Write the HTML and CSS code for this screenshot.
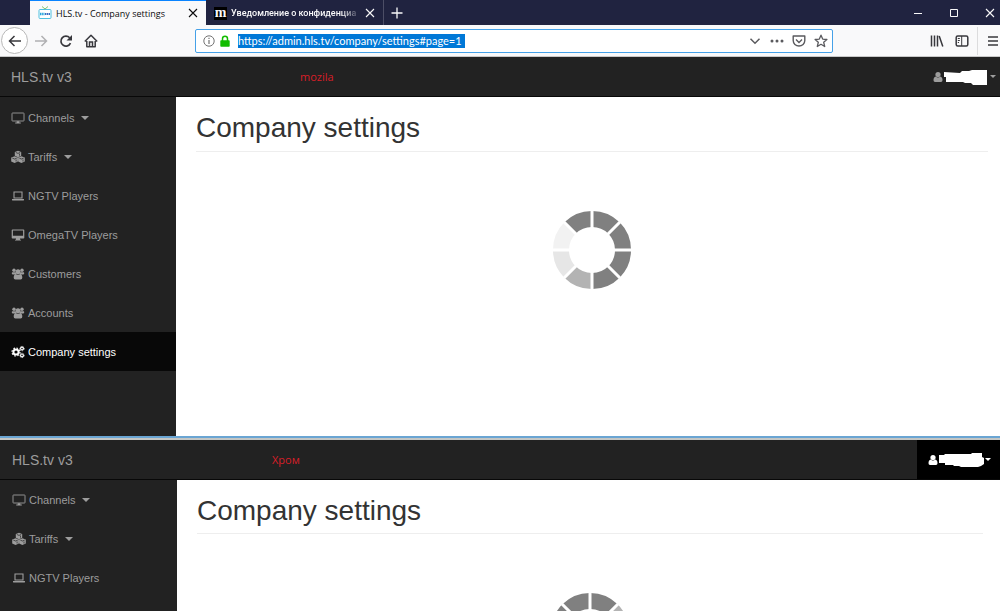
FILE: index.html
```html
<!DOCTYPE html>
<html lang="en">
<head>
<meta charset="utf-8">
<title>HLS.tv - Company settings</title>
<link rel="stylesheet" href="styles.css">
</head>
<body>
<svg class="sprite" aria-hidden="true">
  <symbol id="monitor" viewBox="0 0 14 14"><path d="M1.500 2q-.5 0-.5.5v7q0 .5.5.5h11q.5 0 .5-.5v-7q0-.5-.5-.5z" fill="none" stroke="currentColor" stroke-width=".9"/><path d="M5.700 10.300h2.600v1.200h1.500v.9H4.200v-.9h1.500z" fill="currentColor"/></symbol>
  <symbol id="desktop" viewBox="0 0 14 14"><path fill="currentColor" fill-rule="evenodd" d="M1.500 1.500h11q.8 0 .8.8v7.400q0 .8-.8.8H9v1.200h1v.9H4v-.9h1v-1.200H1.500q-.8 0-.8-.8V2.300q0-.8.8-.8zM1.900 2.600v5.200h10.200V2.600z"/></symbol>
  <symbol id="laptop" viewBox="0 0 14 14"><path d="M3 3h8v6H3z" fill="none" stroke="currentColor" stroke-width="1.100"/><path d="M1 10h12v.7q0 .9-1 .9H2q-1 0-1-.9z" fill="currentColor"/></symbol>
  <symbol id="cubes" viewBox="0 0 14 14"><g fill="currentColor"><path d="M7 .8l3.200 1.300v3.700L7 7.200 3.800 5.800V2.100z"/><path d="M3.600 6.200l3.300 1.400v4L3.600 13 .2 11.600v-4z"/><path d="M10.400 6.200l3.400 1.400v4L10.400 13l-3.300-1.400v-4z"/></g><g fill="none" stroke="#222" stroke-width=".7"><path d="M4.800 2.500L7 3.400l2.200-.9M8.500 3.700v2M1.300 8.100l2.300.9 2.200-.9M5.100 9.500v2M8.300 8.100l2.100.9 2.300-.9M12 9.500v2"/></g></symbol>
  <symbol id="users" viewBox="0 0 14 14"><g fill="currentColor"><circle cx="3" cy="3.300" r="1.700"/><circle cx="11" cy="3.300" r="1.700"/><path d="M1.300 5.200h3.500l.4 2.300H2Q.8 7.500.8 6.400q0-1.200.5-1.200zM12.700 5.200H9.200l-.4 2.300H12q1.200 0 1.200-1.100 0-1.200-.5-1.200z"/><circle cx="7" cy="4.700" r="2.500"/><path d="M4.600 6.900q2.400 1.600 4.800 0 1.900.4 1.900 3.900 0 1.700-1.600 1.700H4.300q-1.600 0-1.600-1.700 0-3.500 1.900-3.900z"/></g></symbol>
  <symbol id="cogs" viewBox="0 0 14 14"><g fill="none" stroke="currentColor"><circle cx="5" cy="7" r="2.600" stroke-width="2"/><circle cx="5" cy="7" r="4" stroke-width="1.200" stroke-dasharray="1.600 1.540"/><circle cx="11" cy="3.600" r="1.400" stroke-width="1.200"/><circle cx="11" cy="3.600" r="2.200" stroke-width=".8" stroke-dasharray="1 .970"/><circle cx="11" cy="10.400" r="1.400" stroke-width="1.200"/><circle cx="11" cy="10.400" r="2.200" stroke-width=".8" stroke-dasharray="1 .970"/></g></symbol>
  <symbol id="user" viewBox="0 0 10 12"><g fill="currentColor"><circle cx="5" cy="3.500" r="2.600"/><path d="M2.700 5.600q2.300 1.700 4.600 0Q9.500 6 9.500 9.300q0 1.700-1.500 1.700H2Q.5 11 .5 9.300.5 6 2.700 5.600z"/></g></symbol>
  <symbol id="caret" viewBox="0 0 8 4"><path d="M0 0h8L4 4z" fill="currentColor"/></symbol>
  <symbol id="close" viewBox="0 0 10 10"><path d="M1 1l8 8M9 1L1 9" fill="none" stroke="currentColor" stroke-width="1.100"/></symbol>
</svg>

<section class="window">
  <div class="titlebar">
    <div class="tab tab-active">
      <svg class="favicon" viewBox="0 0 14 14" aria-hidden="true"><path d="M4 .5L7 3l3-2.500" fill="none" stroke="#7fc46a"/><rect x="1" y="3.500" width="12" height="9" rx="1" fill="#fff" stroke="#4fc0e0"/><path d="M2 8h4.500" stroke="#26a6dd" stroke-width="2.400" stroke-dasharray="1.200 .5"/><path d="M7 8h5" stroke="#3a6fc4" stroke-width="2" stroke-dasharray="1.400 .5"/></svg>
      <span class="tab-title">HLS.tv - Company settings</span>
      <button class="tab-close" aria-label="Close tab"><svg width="10" height="10"><use href="#close"/></svg></button>
    </div>
    <div class="tab">
      <span class="m-icon">m</span>
      <span class="tab-title tab-fade">Уведомление о конфиденциа</span>
      <button class="tab-close" aria-label="Close tab"><svg width="10" height="10"><use href="#close"/></svg></button>
    </div>
    <button class="new-tab" aria-label="New tab"><svg width="12" height="12" viewBox="0 0 12 12"><path d="M6 .5v11M.5 6h11" stroke="currentColor" stroke-width="1.300"/></svg></button>
    <div class="window-controls">
      <button aria-label="Minimize"><svg width="10" height="10" viewBox="0 0 10 10"><path d="M1 5.500h8" stroke="currentColor"/></svg></button>
      <button aria-label="Maximize"><svg width="10" height="10" viewBox="0 0 10 10"><path d="M1.500 1.500h7v7h-7z" fill="none" stroke="currentColor"/></svg></button>
      <button aria-label="Close window"><svg width="10" height="10"><use href="#close"/></svg></button>
    </div>
  </div>

  <div class="toolbar">
    <button class="back" aria-label="Back"><svg width="14" height="14" viewBox="0 0 14 14"><path d="M13 7H1.500M6.500 2l-5 5 5 5" fill="none" stroke="currentColor" stroke-width="1.500"/></svg></button>
    <button class="nav-icon disabled" aria-label="Forward"><svg width="14" height="14" viewBox="0 0 14 14"><path d="M1 7h11.500M7.500 2l5 5-5 5" fill="none" stroke="currentColor" stroke-width="1.500"/></svg></button>
    <button class="nav-icon" aria-label="Reload"><svg width="14" height="14" viewBox="0 0 14 14"><path d="M11.500 9.200A5 5 0 1 1 10.700 3.800" fill="none" stroke="currentColor" stroke-width="1.700"/><path d="M13 1v5.500H7.500z" fill="currentColor"/></svg></button>
    <button class="nav-icon" aria-label="Home"><svg width="14" height="14" viewBox="0 0 14 14"><path d="M.8 7.500L7 1.300l6.200 6.200M2.800 7v5.800h8.400V7" fill="none" stroke="currentColor" stroke-width="1.500" stroke-linejoin="round"/><path d="M5.500 12.500V8h3v4.500" fill="none" stroke="currentColor" stroke-width="1.500"/></svg></button>
    <form class="urlbar">
      <svg width="12" height="12" viewBox="0 0 12 12" aria-hidden="true"><circle cx="6" cy="6" r="5.200" fill="none" stroke="#737373"/><path d="M6 5v4M6 2.800v1.300" stroke="#737373" stroke-width="1.200"/></svg>
      <svg width="12" height="12" viewBox="0 0 12 12" aria-hidden="true"><path d="M3.500 6V3.800a2.500 2.500 0 0 1 5 0V6" fill="none" stroke="#12bc00" stroke-width="1.500"/><rect x="1.300" y="5.200" width="9.400" height="6.500" rx=".8" fill="#12bc00"/></svg>
      <input class="url" type="text" aria-label="Address" value="https://admin.hls.tv/company/settings#page=1">
      <div class="url-actions">
        <button type="button" aria-label="History"><svg width="14" height="14" viewBox="0 0 14 14"><path d="M2.500 4.700L7 9.200l4.500-4.500" fill="none" stroke="currentColor" stroke-width="1.500"/></svg></button>
        <button type="button" aria-label="Page actions"><svg width="14" height="14" viewBox="0 0 14 14"><g fill="currentColor"><circle cx="2" cy="7" r="1.500"/><circle cx="7" cy="7" r="1.500"/><circle cx="12" cy="7" r="1.500"/></g></svg></button>
        <button type="button" aria-label="Save to Pocket"><svg width="14" height="14" viewBox="0 0 14 14"><path d="M1.200 2h11.600v4.500a5.800 5.500 0 0 1-11.600 0z" fill="none" stroke="currentColor" stroke-width="1.400" stroke-linejoin="round"/><path d="M4 5.500l3 3 3-3" fill="none" stroke="currentColor" stroke-width="1.400"/></svg></button>
        <button type="button" aria-label="Bookmark"><svg width="14" height="14" viewBox="0 0 14 14"><path d="M7 1.200l1.700 3.900 4.200.4-3.200 2.800 1 4.200L7 10.300l-3.700 2.200 1-4.200L1.100 5.500l4.200-.4z" fill="none" stroke="currentColor" stroke-width="1.300" stroke-linejoin="round"/></svg></button>
      </div>
    </form>
    <div class="tools">
      <button aria-label="Library"><svg width="14" height="14" viewBox="0 0 14 14"><path d="M1.500 1.500v11M4.500 1.500v11M7.500 1.500v11M9.200 2l3.600 10.500" fill="none" stroke="currentColor" stroke-width="1.500"/></svg></button>
      <button aria-label="Sidebars"><svg width="14" height="14" viewBox="0 0 14 14"><rect x="1.200" y="2" width="11.600" height="10" rx="1.500" fill="none" stroke="currentColor" stroke-width="1.500"/><path d="M6.700 2v10M2.800 4.500h2M2.800 6.500h2M2.800 8.500h1.200" stroke="currentColor"/></svg></button>
      <button class="menu" aria-label="Menu"><svg width="10" height="14" viewBox="0 0 10 14"><path d="M0 3h10M0 7h10M0 11h10" stroke="currentColor" stroke-width="1.500"/></svg></button>
    </div>
  </div>

  <header class="navbar">
    <a class="brand" href="#">HLS.tv v3</a>
    <span class="note">mozila</span>
    <a class="account" href="#" aria-label="Account">
      <svg width="10" height="12"><use href="#user"/></svg>
      <svg width="45" height="16" viewBox="0 0 45 16"><path d="M0 3l16 1 2-2h7l3-1h15v15H29l-2-2h-6l-2-1H2V8H0z" fill="#fff"/></svg>
      <svg width="6" height="3"><use href="#caret"/></svg>
    </a>
  </header>
  <div class="page">
    <nav class="sidebar">
      <a href="#"><svg width="14" height="14"><use href="#monitor"/></svg>Channels<svg class="caret" width="8" height="4"><use href="#caret"/></svg></a>
      <a href="#"><svg width="14" height="14"><use href="#cubes"/></svg>Tariffs<svg class="caret" width="8" height="4"><use href="#caret"/></svg></a>
      <a href="#"><svg width="14" height="14"><use href="#laptop"/></svg>NGTV Players</a>
      <a href="#"><svg width="14" height="14"><use href="#desktop"/></svg>OmegaTV Players</a>
      <a href="#"><svg width="14" height="14"><use href="#users"/></svg>Customers</a>
      <a href="#"><svg width="14" height="14"><use href="#users"/></svg>Accounts</a>
      <a class="current" href="#"><svg width="14" height="14"><use href="#cogs"/></svg>Company settings</a>
    </nav>
    <main class="content">
      <h1>Company settings</h1>
      <svg class="spinner" viewBox="-39 -39 78 78" role="img" aria-label="Loading">
        <g fill="none" stroke="#808080" stroke-width="16">
          <path d="M0-31A31 31 0 0 1 22-22"/><path d="M22-22A31 31 0 0 1 31 0"/><path d="M31 0A31 31 0 0 1 22 22"/><path d="M22 22A31 31 0 0 1 0 31"/>
          <path d="M0 31A31 31 0 0 1-22 22" stroke="#b3b3b3"/><path d="M-22 22A31 31 0 0 1-31 0" stroke="#e6e6e6"/><path d="M-31 0A31 31 0 0 1-22-22" stroke="#f2f2f2"/><path d="M-22-22A31 31 0 0 1 0-31"/>
        </g>
        <path d="M0-39v78M-39 0h78M-28-28l56 56M28-28l-56 56" stroke="#fff" stroke-width="3"/>
      </svg>
    </main>
  </div>
</section>

<section class="window window-second">
  <header class="navbar">
    <a class="brand" href="#">HLS.tv v3</a>
    <span class="note">Хром</span>
    <a class="account account-open" href="#" aria-label="Account">
      <svg width="10" height="12"><use href="#user"/></svg>
      <svg width="45" height="16" viewBox="0 0 45 16"><path d="M0 3h5l1-1h26l1-1h10v4l2 1v6l-3 2-3 1H22l-2-1h-5l-1-1H6v-2H0z" fill="#fff"/></svg>
      <svg width="6" height="3"><use href="#caret"/></svg>
    </a>
  </header>
  <div class="page">
    <nav class="sidebar">
      <a href="#"><svg width="14" height="14"><use href="#monitor"/></svg>Channels<svg class="caret" width="8" height="4"><use href="#caret"/></svg></a>
      <a href="#"><svg width="14" height="14"><use href="#cubes"/></svg>Tariffs<svg class="caret" width="8" height="4"><use href="#caret"/></svg></a>
      <a href="#"><svg width="14" height="14"><use href="#laptop"/></svg>NGTV Players</a>
    </nav>
    <main class="content">
      <h1>Company settings</h1>
      <svg class="spinner" viewBox="-39 -39 78 78" role="img" aria-label="Loading">
        <g fill="none" stroke="#808080" stroke-width="16">
          <path d="M0-31A31 31 0 0 1 22-22"/><path d="M22-22A31 31 0 0 1 31 0" stroke="#b3b3b3"/><path d="M31 0A31 31 0 0 1 22 22" stroke="#e6e6e6"/><path d="M22 22A31 31 0 0 1 0 31" stroke="#f2f2f2"/>
          <path d="M0 31A31 31 0 0 1-22 22"/><path d="M-22 22A31 31 0 0 1-31 0"/><path d="M-31 0A31 31 0 0 1-22-22"/><path d="M-22-22A31 31 0 0 1 0-31"/>
        </g>
        <path d="M0-39v78M-39 0h78M-28-28l56 56M28-28l-56 56" stroke="#fff" stroke-width="3"/>
      </svg>
    </main>
  </div>
</section>
</body>
</html>
```
FILE: styles.css
```css
* { box-sizing: border-box; }

body {
  margin: 0;
  height: 100vh;
  display: flex;
  flex-direction: column;
  overflow: hidden;
  background: #fff;
  font-family: "Liberation Sans", Arial, sans-serif;
  font-size: 11px;
}

.sprite { display: none; }
svg { display: block; flex: none; }
a { color: inherit; text-decoration: none; }

button {
  display: flex;
  align-items: center;
  justify-content: center;
  padding: 0;
  border: 0;
  background: none;
  color: inherit;
}

.window { flex: none; }

.window-second {
  flex: 1;
  min-height: 0;
  display: flex;
  flex-direction: column;
  overflow: hidden;
  border-top: 2px solid #6aa5d3;
}

/* Tab strip */
.titlebar {
  display: flex;
  height: 25px;
  padding-left: 30px;
  background: #202340;
  color: #f9f9fa;
  font-family: "Open Sans", "Noto Sans", sans-serif;
  font-size: 9px;
}

.tab {
  display: flex;
  align-items: center;
  gap: 4px;
  width: 178px;
  padding: 1px 8px 0;
  border-right: 1px solid #4c4e66;
}

.tab-active {
  width: 176px;
  padding-top: 0;
  border-top: 1px solid #0a84ff;
  border-right: 0;
  background: #f9f9fa;
  color: #0c0c0d;
}

.favicon { width: 14px; height: 14px; }
.tab-title { flex: 1; min-width: 0; overflow: hidden; white-space: nowrap; }

.tab-fade {
  font-family: Roboto, "Noto Sans", sans-serif;
  font-weight: 500;
  -webkit-mask-image: linear-gradient(to right, #000 85%, transparent);
  mask-image: linear-gradient(to right, #000 85%, transparent);
}

.m-icon {
  width: 13px;
  height: 13px;
  background: #000;
  font: bold 14px/11px "Liberation Serif", serif;
  text-align: center;
}

.tab-close { width: 10px; height: 16px; }
.new-tab { width: 26px; }
.window-controls { display: flex; gap: 26px; margin-left: auto; padding-right: 5px; }

/* Navigation toolbar */
.toolbar {
  display: flex;
  align-items: center;
  height: 32px;
  padding-left: 1px;
  border-bottom: 1px solid #c8c8c8;
  background: #f9f9fa;
  color: #38383d;
}

.back { width: 27px; height: 27px; border: 1px solid #b8b8b8; border-radius: 50%; background: #fff; }
.nav-icon { width: 25px; height: 25px; }
.disabled { color: #b0b0b2; }

.urlbar {
  flex: 1;
  display: flex;
  align-items: center;
  gap: 4px;
  height: 24px;
  margin: 0 97px 0 92px;
  padding: 0 4px 0 7px;
  border: 1px solid #45a1e8;
  border-radius: 2px;
  background: #fff;
}

.url {
  width: 227px;
  height: 14px;
  margin-left: 3px;
  padding: 0;
  border: 0;
  background: #0078d7;
  color: #fff;
  font: 11px/14px Lato, "Noto Sans", sans-serif;
}

.url-actions { display: flex; gap: 8px; margin-left: auto; color: #5a5a5e; }
.tools { display: flex; align-items: center; gap: 11px; padding-right: 2px; }
.menu { height: 28px; margin-left: -3px; padding-left: 10px; border-left: 1px solid #dcdcdd; }

/* Application bar */
.navbar {
  display: flex;
  flex: none;
  align-items: center;
  height: 40px;
  border-bottom: 1px solid #080808;
  background: #222;
  color: #9d9d9d;
}

.brand { width: 176px; padding-left: 11px; font-size: 14px; }
.note { padding-left: 124px; color: #d81e28; font: 11px/14px "Open Sans", "Noto Sans", sans-serif; }

.account {
  display: flex;
  align-items: center;
  gap: 1px;
  height: 39px;
  margin-left: auto;
  padding-right: 4px;
}

.account-open { padding: 0 9px 0 11px; background: #000; color: #fff; }

/* Page body */
.page { display: flex; flex: 1; min-height: 0; background: #fff; }

.sidebar {
  flex: none;
  width: 176px;
  padding: 1px 0 65px;
  background: #222;
  color: #9d9d9d;
}

.sidebar a { display: flex; align-items: center; gap: 3px; height: 39px; padding-left: 11px; }
.sidebar .current { background: #080808; color: #fff; }
.caret { margin-left: 4px; }

.content { flex: 1; padding: 16px 12px 0 20px; }

h1 {
  margin: 0 0 59px;
  padding-bottom: 8px;
  border-bottom: 1px solid #eee;
  color: #333;
  font-size: 28px;
  font-weight: 400;
  line-height: 30px;
}

.spinner { width: 78px; height: 78px; margin: 0 auto; }

.window-second .navbar { height: 42px; border-top: 2px solid #c4c6c4; }
.window-second .sidebar { width: 177px; padding-top: 0; }
.window-second .sidebar a,
.window-second .brand { padding-left: 12px; }
.window-second .note { padding-left: 96px; }
.window-second .content { padding-right: 17px; }
.window-second h1 { padding-bottom: 7px; }
```
